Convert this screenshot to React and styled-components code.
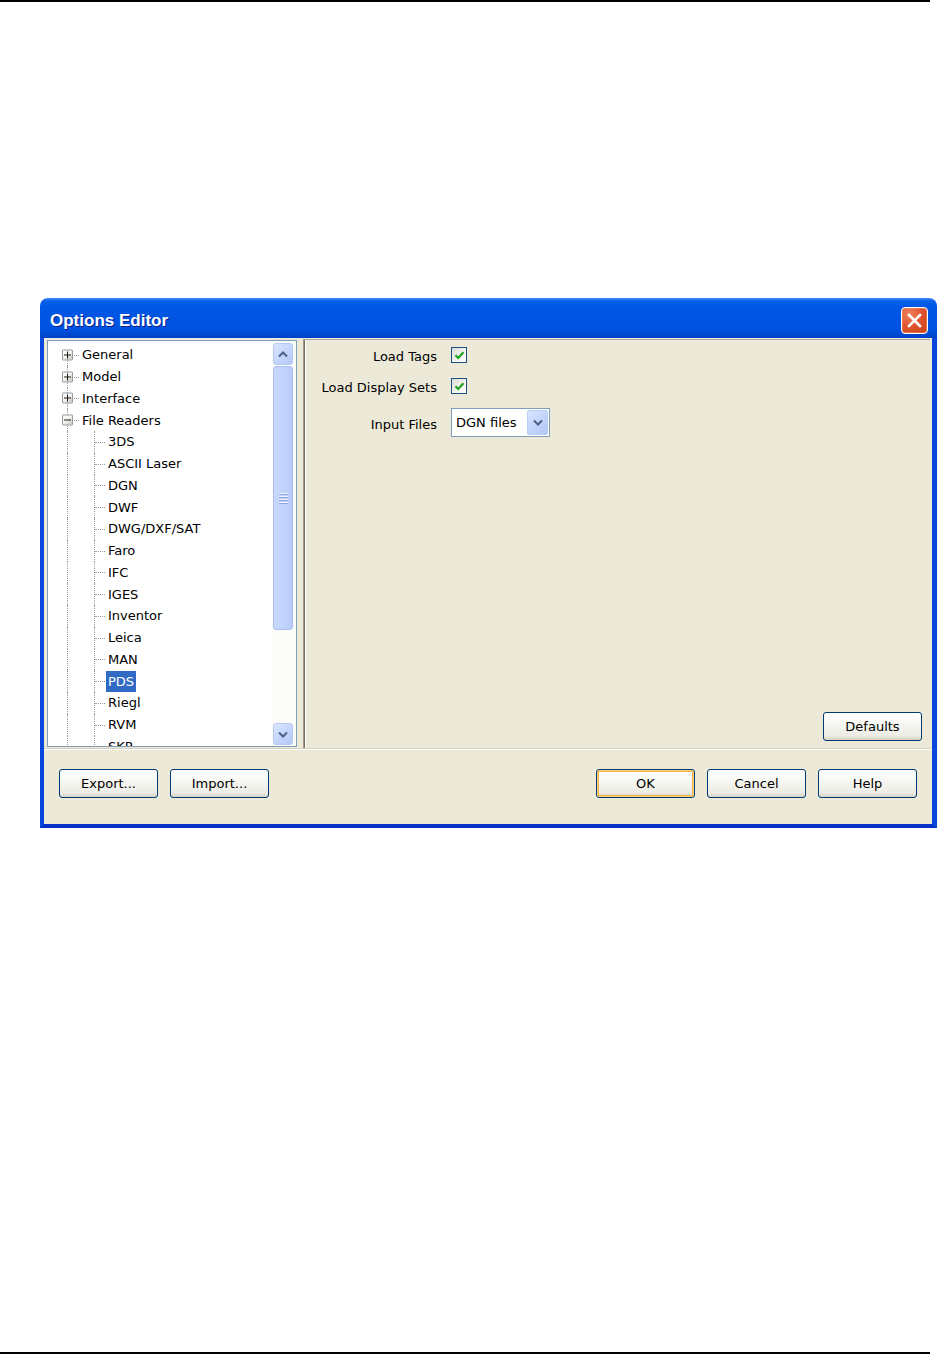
import React from "react";
import styled, { createGlobalStyle, css } from "styled-components";

const Global = createGlobalStyle`
  html, body { margin: 0; padding: 0; background: #fff; }
  body { font-family: "DejaVu Sans", "Liberation Sans", sans-serif; }
  * { box-sizing: border-box; }
`;

const Page = styled.div`
  width: 937px;
  height: 1355px;
  display: flex;
  flex-direction: column;
  overflow: hidden;
`;

const Rule = styled.div`
  width: 930px;
  height: 2px;
  background: #000;
  flex: none;
`;

const Spacer = styled.div`
  flex: ${(p) => (p.$grow ? 1 : "none")};
  height: ${(p) => (p.$h ? `${p.$h}px` : "auto")};
`;

const Dialog = styled.div`
  margin-left: 40px;
  width: 897px;
  height: 530px;
  display: flex;
  flex-direction: column;
  flex: none;
  font-size: 13px;
  color: #000;
`;

const TitleBar = styled.div`
  height: 40px;
  flex: none;
  border-radius: 8px 8px 0 0;
  background: linear-gradient(
    to bottom,
    #3d8cf8 0px,
    #0a60ea 3px,
    #0058e6 8px,
    #0054e3 20px,
    #0053e1 30px,
    #0048d4 36px,
    #0041c7 40px
  );
  display: flex;
  align-items: center;
  justify-content: space-between;
  padding: 0 9px 0 10px;
`;

const Title = styled.div`
  font-family: "Liberation Sans", Arial, sans-serif;
  font-weight: bold;
  font-size: 17px;
  color: #fff;
  text-shadow: 1px 1px 0 #0a1e8c;
  padding-top: 6px;
`;

const CloseButton = styled.div`
  width: 27px;
  height: 27px;
  margin-top: 5px;
  border: 1px solid #fff;
  border-radius: 4px;
  background: radial-gradient(circle at 30% 25%, #f0845f 0%, #e05530 45%, #c8401b 100%);
  display: flex;
  align-items: center;
  justify-content: center;
  box-shadow: inset 0 0 0 1px rgba(255, 180, 150, 0.35);
`;

const Frame = styled.div`
  flex: 1;
  display: flex;
  flex-direction: column;
  background: #ece9d8;
  border-left: 4px solid #0a48dc;
  border-right: 5px solid #0a48dc;
  border-bottom: 4px solid #0831c8;
`;

const MainRow = styled.div`
  height: 410px;
  display: flex;
  padding: 1px 2px 0 3px;
  gap: 6px;
  flex: none;
`;

const TreeBox = styled.div`
  width: 250px;
  margin-top: 1px;
  margin-bottom: 1px;
  border: 1px solid #7f9db9;
  background: #fff;
  display: flex;
  overflow: hidden;
`;

const TreeList = styled.div`
  flex: 1;
  padding-top: 3px;
  overflow: hidden;
  display: flex;
  flex-direction: column;
`;

const Row = styled.div`
  height: 21.75px;
  flex: none;
  display: flex;
  align-items: center;
`;

const Guide = styled.span`
  position: relative;
  flex: none;
  align-self: stretch;
  width: ${(p) => p.$w}px;

  ${(p) =>
    p.$vertical &&
    css`
      &::before {
        content: "";
        position: absolute;
        left: ${p.$x}px;
        top: ${p.$first ? "50%" : "0"};
        bottom: 0;
        border-left: 1px dotted #9c9c9c;
      }
    `}

  ${(p) =>
    p.$branch &&
    css`
      &::after {
        content: "";
        position: absolute;
        left: ${p.$x + 1}px;
        width: ${p.$w - p.$x - 2}px;
        top: 50%;
        border-top: 1px dotted #9c9c9c;
      }
    `}
`;

const Expander = styled.span`
  position: absolute;
  left: 14px;
  top: 50%;
  transform: translateY(-50%);
  width: 11px;
  height: 11px;
  border: 1px solid #8f9ba0;
  border-radius: 1px;
  background: linear-gradient(135deg, #ffffff 0%, #f2f2ee 50%, #c8c6bb 100%);
  z-index: 1;
  display: flex;
  align-items: center;
  justify-content: center;
`;

const Label = styled.span`
  height: 21px;
  line-height: 21px;
  padding: 0 2px;
  white-space: nowrap;
  ${(p) =>
    p.$selected &&
    css`
      background: #316ac5;
      color: #fff;
    `}
`;

const ScrollBar = styled.div`
  width: 24px;
  flex: none;
  display: flex;
  flex-direction: column;
  padding: 2px 3px 1px 1px;
  background: #fbfbf8;
  gap: 1px;
`;

const ScrollButton = styled.div`
  height: 22px;
  flex: none;
  border: 1px solid #b6c9f3;
  border-radius: 3px;
  background: linear-gradient(135deg, #dbe6fe 0%, #c6d6fc 50%, #b4c8f8 100%);
  display: flex;
  align-items: center;
  justify-content: center;
`;

const Thumb = styled.div`
  height: 264px;
  flex: none;
  border: 1px solid #a9bef1;
  border-radius: 3px;
  background: linear-gradient(to right, #c9d8fc 0%, #c1d3fb 60%, #b6c9f6 100%);
  display: flex;
  align-items: center;
  justify-content: center;
`;

const Track = styled.div`
  flex: 1;
`;

const Grip = styled.div`
  width: 9px;
  display: flex;
  flex-direction: column;
  gap: 1px;
  span {
    height: 1px;
    background: #eef3fe;
    box-shadow: 0 1px 0 #8ca6e0;
    margin-bottom: 1px;
  }
`;

const Panel = styled.div`
  flex: 1;
  border-top: 1px solid #aca899;
  border-left: 1px solid #9d9a8b;
  box-shadow: inset 1px 0 0 #716f64, inset 2px 0 0 #fff;
  display: flex;
  flex-direction: column;
  justify-content: space-between;
`;

const Form = styled.div`
  display: grid;
  grid-template-columns: 133px auto;
  column-gap: 14px;
  row-gap: 15px;
  padding-top: 7px;
  align-items: center;
  justify-items: start;
`;

const FieldLabel = styled.span`
  justify-self: end;
  white-space: nowrap;
  line-height: 16px;
  position: relative;
  top: 2px;
`;

const CheckBox = styled.span`
  width: 16px;
  height: 16px;
  border: 1px solid #1c5180;
  background: linear-gradient(135deg, #dcdcd6 0%, #f4f4f0 60%, #ffffff 100%);
  display: flex;
  align-items: center;
  justify-content: center;
`;

const Select = styled.div`
  width: 99px;
  height: 29px;
  border: 1px solid #7f9db9;
  background: #fff;
  display: flex;
  align-items: center;
  justify-content: space-between;
  padding: 1px 1px 1px 4px;
  margin-top: -1px;
`;

const DropButton = styled.div`
  width: 21px;
  height: 25px;
  border: 1px solid #b9cdf6;
  border-radius: 2px;
  background: linear-gradient(135deg, #dae5fd 0%, #c2d4fb 55%, #b2c7f6 100%);
  display: flex;
  align-items: center;
  justify-content: center;
`;

const Separator = styled.div`
  height: 2px;
  flex: none;
  border-top: 1px solid #d6d2c2;
  border-bottom: 1px solid #fff;
`;

const ButtonBar = styled.div`
  flex: 1;
  display: flex;
  justify-content: space-between;
  align-items: flex-start;
  padding: 19px 15px 0 15px;
`;

const Group = styled.div`
  display: flex;
  gap: 12px;
`;

const Button = styled.div`
  width: 99px;
  height: 29px;
  border: 1px solid #003c74;
  border-radius: 3px;
  background: linear-gradient(to bottom, #ffffff 0%, #f7f7f3 40%, #ecebe4 85%, #d6d0c5 100%);
  display: flex;
  align-items: center;
  justify-content: center;
  font-size: 13px;
  color: #000;
  ${(p) =>
    p.$default &&
    css`
      box-shadow: inset 0 0 0 1px #fbd07a, inset 0 0 0 2px #f5b44a;
    `}
  ${(p) =>
    p.$corner &&
    css`
      align-self: flex-end;
      margin: 0 8px 7px 0;
    `}
`;

const Plus = ({ minus }) => (
  <svg width="9" height="9" viewBox="0 0 9 9">
    <rect x="1" y="4" width="7" height="1" fill="#1a1a1a" />
    {!minus && <rect x="4" y="1" width="1" height="7" fill="#1a1a1a" />}
  </svg>
);

const Chevron = ({ up, color = "#4d6185" }) => (
  <svg width="10" height="7" viewBox="0 0 10 7">
    <path
      d={up ? "M1 5.5 L5 1.5 L9 5.5" : "M1 1.5 L5 5.5 L9 1.5"}
      fill="none"
      stroke={color}
      strokeWidth="2"
    />
  </svg>
);

const Check = () => (
  <svg width="11" height="11" viewBox="0 0 11 11">
    <path d="M1.5 5.2 L4.2 8 L9.5 2.3" fill="none" stroke="#21a121" strokeWidth="2.2" />
  </svg>
);

const roots = ["General", "Model", "Interface"];
const children = [
  "3DS",
  "ASCII Laser",
  "DGN",
  "DWF",
  "DWG/DXF/SAT",
  "Faro",
  "IFC",
  "IGES",
  "Inventor",
  "Leica",
  "MAN",
  "PDS",
  "Riegl",
  "RVM",
  "SKP",
];

export default function App() {
  return (
    <Page>
      <Global />
      <Rule />
      <Spacer $h={296} />
      <Dialog>
        <TitleBar>
          <Title>Options Editor</Title>
          <CloseButton>
            <svg width="15" height="15" viewBox="0 0 15 15">
              <path d="M2 2 L13 13 M13 2 L2 13" stroke="#fff" strokeWidth="2.6" strokeLinecap="square" />
            </svg>
          </CloseButton>
        </TitleBar>
        <Frame>
          <MainRow>
            <TreeBox>
              <TreeList>
                {roots.map((r, i) => (
                  <Row key={r}>
                    <Guide $w={32} $x={19} $vertical $first={i === 0} $branch>
                      <Expander>
                        <Plus />
                      </Expander>
                    </Guide>
                    <Label>{r}</Label>
                  </Row>
                ))}
                <Row>
                  <Guide $w={32} $x={19} $vertical $branch>
                    <Expander>
                      <Plus minus />
                    </Expander>
                  </Guide>
                  <Label>File Readers</Label>
                </Row>
                {children.map((c) => (
                  <Row key={c}>
                    <Guide $w={32} $x={19} $vertical />
                    <Guide $w={26} $x={14} $vertical $branch />
                    <Label $selected={c === "PDS"}>{c}</Label>
                  </Row>
                ))}
              </TreeList>
              <ScrollBar>
                <ScrollButton>
                  <Chevron up />
                </ScrollButton>
                <Thumb>
                  <Grip>
                    <span />
                    <span />
                    <span />
                    <span />
                  </Grip>
                </Thumb>
                <Track />
                <ScrollButton>
                  <Chevron />
                </ScrollButton>
              </ScrollBar>
            </TreeBox>
            <Panel>
              <Form>
                <FieldLabel>Load Tags</FieldLabel>
                <CheckBox>
                  <Check />
                </CheckBox>
                <FieldLabel>Load Display Sets</FieldLabel>
                <CheckBox>
                  <Check />
                </CheckBox>
                <FieldLabel>Input Files</FieldLabel>
                <Select>
                  <span>DGN files</span>
                  <DropButton>
                    <Chevron />
                  </DropButton>
                </Select>
              </Form>
              <Button $corner>Defaults</Button>
            </Panel>
          </MainRow>
          <Separator />
          <ButtonBar>
            <Group>
              <Button>Export...</Button>
              <Button>Import...</Button>
            </Group>
            <Group>
              <Button $default>OK</Button>
              <Button>Cancel</Button>
              <Button>Help</Button>
            </Group>
          </ButtonBar>
        </Frame>
      </Dialog>
      <Spacer $grow />
      <Rule />
      <Spacer $h={1} />
    </Page>
  );
}
